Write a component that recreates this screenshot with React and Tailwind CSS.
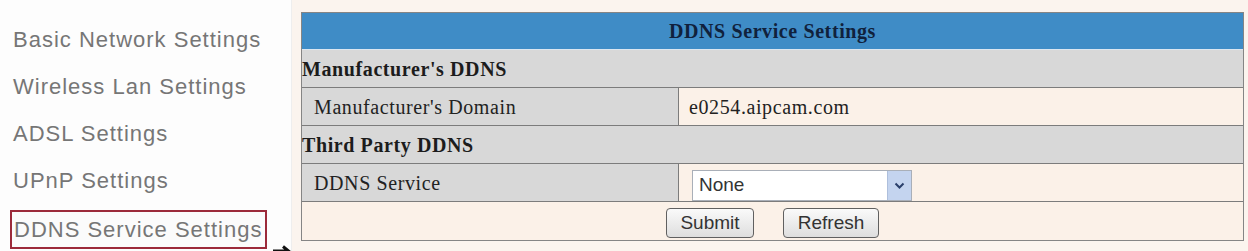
import React from 'react';

const menu = [
  'Basic Network Settings',
  'Wireless Lan Settings',
  'ADSL Settings',
  'UPnP Settings',
];

const serif = "font-['Liberation_Serif','Times_New_Roman',serif] text-[20px] tracking-[0.6px]";
const sans = "font-['Liberation_Sans',Arial,sans-serif]";

function Row({ label, children, last }) {
  return (
    <div className={`flex h-[38px] ${last ? '' : 'border-b border-[#7c7c7c]'}`}>
      <div className={`w-[377px] shrink-0 bg-[#d8d8d8] border-r border-[#7c7c7c] flex items-center pl-[12px] text-[#222] ${serif}`}>
        {label}
      </div>
      <div className="flex-1 bg-[#fbf1e8] flex items-center pl-[10px]">{children}</div>
    </div>
  );
}

function Section({ title }) {
  return (
    <div className={`h-[38px] bg-[#d8d8d8] border-b border-[#7c7c7c] flex items-center font-bold text-[#1c1c1c] ${serif}`}>
      {title}
    </div>
  );
}

export default function App() {
  return (
    <div className="flex h-[251px] w-[1248px] overflow-hidden bg-[#fbf4ee]">
      {/* left menu */}
      <div className={`w-[292px] shrink-0 bg-[#fdfdfd] border-r border-[#eeeeee] pt-[16px] ${sans} text-[22px] tracking-[1px] text-[#767676] whitespace-nowrap`}>
        {menu.map((m) => (
          <div key={m} className="h-[47px] flex items-center pl-[13px]">{m}</div>
        ))}
        <div className="h-[47px] flex items-center pl-[10px]">
          <div className="shrink-0 h-[39px] mt-[3px] border-[2.5px] border-[#9c2a3a] flex items-center pl-[2px] pr-[3px] bg-[#fbfbfb]">
            DDNS Service Settings
          </div>
          <svg className="shrink-0 self-end ml-[5px] mb-[-6px]" width="20" height="12" viewBox="0 0 20 12">
            <path d="M1 6h15M11 1.5l5.5 4.5-5.5 4.5" stroke="#111" strokeWidth="3" fill="none" />
          </svg>
        </div>
      </div>

      {/* settings table */}
      <div className="pl-[9px] pt-[12px]">
        <div className="w-[943px] border border-[#858585]">
          <div className={`h-[37px] bg-[#3f8cc6] border-b border-[#dce6f0] flex items-center justify-center font-bold text-[#10213c] ${serif}`}>
            DDNS Service Settings
          </div>
          <Section title="Manufacturer's DDNS" />
          <Row label="Manufacturer's Domain">
            <span className={`text-[#222] ${serif}`}>e0254.aipcam.com</span>
          </Row>
          <Section title="Third Party DDNS" />
          <div className="flex h-[38px] border-b border-[#7c7c7c]">
            <div className={`w-[377px] shrink-0 bg-[#d8d8d8] border-r border-[#7c7c7c] flex items-center pl-[12px] text-[#222] ${serif}`}>
              DDNS Service
            </div>
            <div className="flex-1 bg-[#fbf1e8] flex items-end pl-[13px]">
              <div className="w-[220px] h-[31px] border border-[#a9afb8] bg-white flex">
                <span className={`flex-1 flex items-center pl-[6px] text-[19px] text-[#333] ${sans}`}>None</span>
                <span className="w-[24px] bg-[#c4d4ef] border-l border-[#aebfdc] flex items-center justify-center">
                  <svg width="11" height="8" viewBox="0 0 11 8">
                    <path d="M1.5 1.5l4 4 4-4" stroke="#2a3f6b" strokeWidth="2" fill="none" />
                  </svg>
                </span>
              </div>
            </div>
          </div>
          <div className="h-[38px] bg-[#fbf1e8] flex items-center justify-center gap-[29px] pt-[4px]">
            <button className={`w-[88px] h-[30px] rounded-[4px] border border-[#606060] bg-gradient-to-b from-[#fafafa] to-[#dedede] text-[19px] text-[#333] ${sans}`}>
              Submit
            </button>
            <button className={`w-[96px] h-[30px] rounded-[4px] border border-[#606060] bg-gradient-to-b from-[#fafafa] to-[#dedede] text-[19px] text-[#333] ${sans}`}>
              Refresh
            </button>
          </div>
        </div>
      </div>
    </div>
  );
}
